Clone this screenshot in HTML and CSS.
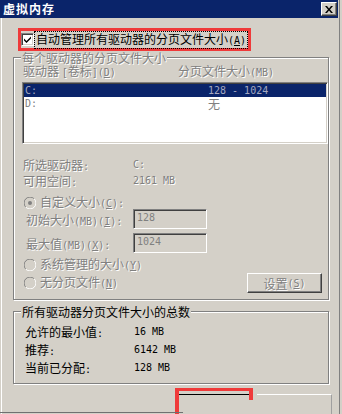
FILE: index.html
```html
<!DOCTYPE html>
<html lang="zh-CN">

<head>
    <meta charset="UTF-8">
    <meta name="viewport" content="width=device-width, initial-scale=1.0">
    <title>虚拟内存</title>
    <link rel="stylesheet" href="styles.css">
</head>

<body>
    <div class="window">
        <div class="titlebar">
            <span class="title">虚拟内存</span>
            <span class="close">
                <svg width="8" height="7" viewBox="0 0 8 7"><path d="M0 0h2l2 2.5L6 0h2L5 3.5 8 7H6L4 4.5 2 7H0l3-3.5z" fill="#000"/></svg>
            </span>
        </div>

        <div class="dialog-body">
            <div class="auto-row">
                <span class="checkbox">
                    <svg width="9" height="9" viewBox="0 0 9 9"><path d="M1 3.5 3.5 6 8 1.5V3.5L3.5 8 1 5.5z" fill="#000"/></svg>
                </span>
                <span class="auto-label">自动管理所有驱动器的分页文件大小<span class="hw">(<u>A</u>)</span></span>
            </div>

            <fieldset class="group paging">
                <legend class="disabled">每个驱动器的分页文件大小</legend>
                <div class="list-head disabled">
                    <span>驱动器 <span class="hw">[</span>卷标<span class="hw">](<u>D</u>)</span></span>
                    <span>分页文件大小<span class="hw">(MB)</span></span>
                </div>
                <div class="drive-list">
                    <div class="drive selected"><span class="hw">C:</span><span class="hw">128 - 1024</span></div>
                    <div class="drive"><span class="hw">D:</span><span>无</span></div>
                </div>

                <div class="info disabled">
                    <span>所选驱动器<span class="hw">:</span></span><span class="hw">C:</span>
                    <span>可用空间<span class="hw">:</span></span><span class="hw">2161 MB</span>
                </div>

                <div class="options">
                    <div class="option-list">
                        <div class="radio-row disabled">
                            <svg class="radio" width="12" height="12" viewBox="0 0 12 12">
                                <circle cx="6" cy="6" r="5" fill="#d4d0c8"/>
                                <path d="M10.2 1.8A5.6 5.6 0 0 0 1.8 10.2" stroke="#808080" fill="none"/>
                                <path d="M1.8 10.2A5.6 5.6 0 0 0 10.2 1.8" stroke="#fff" fill="none"/>
                                <circle cx="6" cy="6" r="2" fill="#808080"/>
                            </svg>
                            <span>自定义大小<span class="hw">(<u>C</u>):</span></span>
                        </div>
                        <div class="size-row disabled">
                            <span>初始大小<span class="hw">(MB)(<u>I</u>):</span></span>
                            <span class="textbox hw">128</span>
                        </div>
                        <div class="size-row disabled">
                            <span>最大值<span class="hw">(MB)(<u>X</u>):</span></span>
                            <span class="textbox hw">1024</span>
                        </div>
                        <div class="radio-row disabled spaced">
                            <svg class="radio" width="12" height="12" viewBox="0 0 12 12">
                                <circle cx="6" cy="6" r="5" fill="#d4d0c8"/>
                                <path d="M10.2 1.8A5.6 5.6 0 0 0 1.8 10.2" stroke="#808080" fill="none"/>
                                <path d="M1.8 10.2A5.6 5.6 0 0 0 10.2 1.8" stroke="#fff" fill="none"/>
                            </svg>
                            <span>系统管理的大小<span class="hw">(<u>Y</u>)</span></span>
                        </div>
                        <div class="radio-row disabled spaced">
                            <svg class="radio" width="12" height="12" viewBox="0 0 12 12">
                                <circle cx="6" cy="6" r="5" fill="#d4d0c8"/>
                                <path d="M10.2 1.8A5.6 5.6 0 0 0 1.8 10.2" stroke="#808080" fill="none"/>
                                <path d="M1.8 10.2A5.6 5.6 0 0 0 10.2 1.8" stroke="#fff" fill="none"/>
                            </svg>
                            <span>无分页文件<span class="hw">(<u>N</u>)</span></span>
                        </div>
                    </div>
                    <span class="button set disabled">设置<span class="hw">(<u>S</u>)</span></span>
                </div>
            </fieldset>

            <fieldset class="group totals">
                <legend>所有驱动器分页文件大小的总数</legend>
                <div class="info totals-grid">
                    <span>允许的最小值<span class="hw">:</span></span><span class="hw">16 MB</span>
                    <span>推荐<span class="hw">:</span></span><span class="hw">6142 MB</span>
                    <span>当前已分配<span class="hw">:</span></span><span class="hw">128 MB</span>
                </div>
            </fieldset>

            <div class="buttons">
                <span class="button default"></span>
                <span class="button cancel"></span>
            </div>
        </div>
    </div>
</body>

</html>
```

FILE: styles.css
```css
body {
    margin: 0;
    padding: 0;
    background-color: #d4d0c8;
    font-family: "Noto Sans CJK SC", sans-serif;
    font-size: 12px;
    color: #000;
}

.window {
    position: relative;
    width: 339px;
    height: 414px;
    overflow: hidden;
    background-color: #d4d0c8;
    border-right: 1px solid #808080;
}

/* bottom frame edge, only the left part survives in the shot */
.window::after {
    content: "";
    position: absolute;
    left: 0;
    top: 412px;
    width: 183px;
    height: 1px;
    background-color: #707070;
}

.titlebar {
    display: flex;
    align-items: center;
    justify-content: space-between;
    height: 18px;
    margin-right: 1px;
    padding: 0 1px 0 3px;
    background-color: #0a246a;
}

.title {
    color: #fff;
    font-weight: bold;
    font-size: 12px;
    letter-spacing: 1px;
    line-height: 14px;
}

.close {
    display: flex;
    align-items: center;
    justify-content: center;
    width: 16px;
    height: 14px;
    box-sizing: border-box;
    background-color: #d4d0c8;
    border-top: 1px solid #fff;
    border-left: 1px solid #fff;
    border-right: 1px solid #404040;
    border-bottom: 1px solid #404040;
    box-shadow: inset -1px -1px 0 #808080;
}

.dialog-body {
    padding-top: 10px;
    height: 396px;
    box-sizing: border-box;
    box-shadow: inset 1px 0 0 #d4d0c8, inset 2px 0 0 #fff;
}

.hw {
    font-family: "DejaVu Sans Mono", monospace;
    font-size: 10px;
}

.disabled {
    color: #808080;
    text-shadow: 1px 1px 0 #fff;
}

/* checkbox row with the red marker round it */
.auto-row {
    display: flex;
    align-items: center;
    width: 233px;
    height: 23px;
    box-sizing: border-box;
    margin-left: 18px;
    border: 3px solid #ef3a3a;
}

.checkbox {
    display: flex;
    align-items: center;
    justify-content: center;
    width: 13px;
    height: 13px;
    box-sizing: border-box;
    background-color: #fff;
    border-top: 1px solid #808080;
    border-left: 1px solid #808080;
    border-right: 1px solid #fff;
    border-bottom: 1px solid #fff;
    box-shadow: inset 1px 1px 0 #404040, inset -1px -1px 0 #d4d0c8;
}

.auto-label {
    line-height: 12px;
    padding: 1px;
    border: 1px dotted #000;
    white-space: nowrap;
}

/* group boxes */
.group {
    width: 316px;
    min-inline-size: 0;
    box-sizing: border-box;
    margin: 0 0 0 13px;
    border: 1px solid #808080;
    box-shadow: inset 1px 1px 0 #fff, 1px 1px 0 #fff;
}

.group legend {
    padding: 0 1px;
    margin-left: -1px;
    line-height: 13px;
    background-color: #d4d0c8;
    white-space: nowrap;
}

.paging {
    padding: 0 0 6px 8px;
}

.totals {
    margin-top: 5px;
    padding: 6px 0 5px 8px;
}

.list-head {
    display: grid;
    grid-template-columns: 155px auto;
    padding-left: 1px;
    line-height: 12px;
    margin-top: 1px;
    margin-bottom: 3px;
    white-space: nowrap;
}

.drive-list {
    height: 62px;
    box-sizing: border-box;
    background-color: #fff;
    border-top: 1px solid #808080;
    border-left: 1px solid #808080;
    border-right: 1px solid #fff;
    border-bottom: 1px solid #fff;
    box-shadow: inset 1px 1px 0 #404040, inset -1px -1px 0 #d4d0c8;
    padding: 1px 1px 0 1px;
}

.drive {
    display: grid;
    grid-template-columns: 183px auto;
    padding-left: 1px;
    height: 13px;
    line-height: 13px;
    color: #808080;
}

.drive.selected {
    background-color: #0a246a;
    color: #a4a8c0;
}

.info {
    display: grid;
    grid-template-columns: 110px auto;
    margin-top: 14px;
    padding-left: 1px;
    line-height: 14px;
    white-space: nowrap;
}

.totals-grid {
    grid-template-columns: 109px auto;
    margin-top: 0;
    padding-left: 3px;
    line-height: 16px;
}

.options {
    display: flex;
    align-items: flex-end;
    justify-content: space-between;
    margin-right: 6px;
}

.option-list {
    padding-bottom: 4px;
}

.radio-row {
    display: flex;
    align-items: center;
    gap: 4px;
    height: 13px;
    margin-top: 6px;
    padding-left: 2px;
    line-height: 13px;
    white-space: nowrap;
}

.radio-row.spaced {
    margin-top: 5px;
}

.radio {
    flex: 0 0 12px;
}

.size-row {
    display: grid;
    grid-template-columns: 107px 74px;
    align-items: center;
    height: 20px;
    padding-left: 4px;
    white-space: nowrap;
}

.size-row + .size-row {
    margin-top: 4px;
}

.textbox {
    display: block;
    height: 20px;
    box-sizing: border-box;
    padding: 2px 3px;
    line-height: 12px;
    background-color: #d4d0c8;
    border-top: 1px solid #808080;
    border-left: 1px solid #808080;
    border-right: 1px solid #fff;
    border-bottom: 1px solid #fff;
    box-shadow: inset 1px 1px 0 #404040, inset -1px -1px 0 #d4d0c8;
    text-shadow: none;
}

.button {
    display: flex;
    align-items: center;
    justify-content: center;
    width: 75px;
    box-sizing: border-box;
    background-color: #d4d0c8;
    border-top: 1px solid #fff;
    border-left: 1px solid #fff;
    border-right: 1px solid #404040;
    border-bottom: 1px solid #404040;
    box-shadow: inset -1px -1px 0 #808080;
}

.set {
    height: 20px;
    line-height: 13px;
}

.buttons {
    display: flex;
    justify-content: flex-end;
    gap: 6px;
    margin-top: 10px;
    padding-right: 7px;
}

/* the lower part of both buttons is wiped out in the shot */
.buttons .button {
    height: 40px;
    border: none;
    box-shadow: none;
}

.default {
    position: relative;
    border-top: 1px solid #000 !important;
}

.cancel {
    border-top: 1px solid #fff !important;
    border-right: 1px solid #a0a0a0 !important;
}

/* red marker drawn over the OK button */
.default::before {
    content: "";
    position: absolute;
    top: -7px;
    left: -1px;
    width: 78px;
    height: 30px;
    box-sizing: border-box;
    border-top: 3px solid #ef3a3a;
    border-left: 4px solid #ef3a3a;
}

.default::after {
    content: "";
    position: absolute;
    top: -7px;
    right: -2px;
    width: 4px;
    height: 12px;
    background-color: #ef3a3a;
}
```
